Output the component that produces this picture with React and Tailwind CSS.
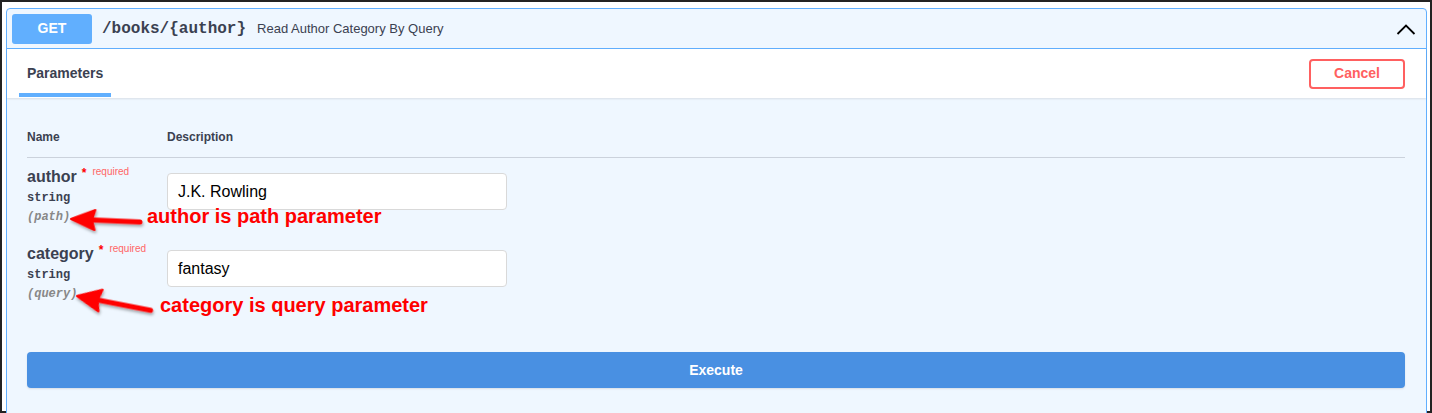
import React from "react";

const sans = { fontFamily: '"Liberation Sans", Arial, sans-serif' };
const mono = { fontFamily: '"Liberation Mono", "Courier New", monospace' };

function Arrow({ x, y, angle, length, head = 11 }) {
  return (
    <g transform={`translate(${x} ${y}) rotate(${angle})`} filter="url(#shadow)">
      <line x1={18} y1={0} x2={length} y2={0} stroke="#ff0000" strokeWidth={5} strokeLinecap="round" />
      <polygon points={`0,0 24,${-head} 21,0 24,${head}`} fill="#ff0000" stroke="#ff0000" strokeWidth={2} strokeLinejoin="round" />
    </g>
  );
}

function ParamRow({ name, kind, value }) {
  return (
    <div className="flex h-[77px]">
      <div className="w-[140px] pt-[9px]">
        <div className="h-[20px] text-[16px] leading-[20px] font-bold text-[#3b4151]">
          {name}
          <span className="ml-[5px] text-[12px] leading-[0] text-[#ff0000] align-[5px]">*</span>
          <span className="ml-[6px] text-[10px] leading-[0] font-normal text-[#ff6666] align-[7px]">required</span>
        </div>
        <div className="mt-[3px] text-[12px] leading-[16px] font-bold text-[#3b4151]" style={mono}>
          string
        </div>
        <div className="mt-[3px] text-[12px] leading-[16px] italic font-bold text-[#888888]" style={mono}>
          ({kind})
        </div>
      </div>
      <div className="pt-[15px]">
        <div className="w-[340px] h-[37px] bg-white border border-[#d9d9d9] rounded-[4px] pl-[10px] flex items-center text-[16px] text-black">
          {value}
        </div>
      </div>
    </div>
  );
}

export default function App() {
  return (
    <div className="relative w-[1432px] h-[413px] overflow-hidden bg-white" style={sans}>
      <div className="h-full border-2 border-[#222222] pl-[4px] pt-[6px] pr-[3px]">
        <div className="h-[420px] border border-[#61affe] rounded-[4px] bg-[#eff7ff]">
          {/* summary */}
          <div className="h-[40px] flex items-center pl-[5px] pr-[5px] border-b border-[#61affe]">
            <div className="w-[80px] h-[30px] rounded-[3px] bg-[#61affe] text-white font-bold text-[14px] flex items-center justify-center">
              GET
            </div>
            <div className="ml-[10px] text-[16px] font-bold text-[#3b4151]" style={mono}>
              /books/{"{author}"}
            </div>
            <div className="ml-[11px] text-[13px] text-[#3b4151]">Read Author Category By Query</div>
            <div className="ml-auto mr-[5px]">
              <svg width="20" height="20" viewBox="0 0 20 20">
                <polyline points="1.5,15 10,6.5 18.5,15" fill="none" stroke="#000" strokeWidth="1.8" />
              </svg>
            </div>
          </div>

          {/* section header */}
          <div className="h-[49px] bg-white flex items-stretch pl-[12px] pr-[21px] shadow-[0_1px_2px_rgba(0,0,0,0.1)]">
            <div className="flex flex-col">
              <div className="pt-[14px] px-[8px] text-[14px] leading-[20px] font-bold text-[#3b4151]">Parameters</div>
              <div className="mt-auto mb-[1px] h-[4px] bg-[#61affe]" />
            </div>
            <div className="ml-auto flex items-center">
              <button className="w-[96px] h-[30px] border-2 border-[#ff6060] rounded-[4px] text-[14px] font-bold text-[#ff6060] bg-transparent">
                Cancel
              </button>
            </div>
          </div>

          {/* parameters */}
          <div className="pl-[20px] pr-[21px]">
            <div className="pt-[31px] pb-[12px] flex text-[12px] leading-[16px] font-bold text-[#3b4151] border-b border-[#3b4151]/20">
              <div className="w-[140px]">Name</div>
              <div>Description</div>
            </div>
            <ParamRow name="author" kind="path" value="J.K. Rowling" />
            <ParamRow name="category" kind="query" value="fantasy" />
            <button className="mt-[40px] w-full h-[36px] rounded-[4px] bg-[#4990e2] text-white text-[14px] font-bold shadow-[0_1px_2px_rgba(0,0,0,0.1)]">
              Execute
            </button>
          </div>
        </div>
      </div>

      {/* annotations */}
      <svg className="absolute left-0 top-0 pointer-events-none" width="1432" height="413">
        <defs>
          <filter id="shadow" x="-20%" y="-50%" width="140%" height="200%">
            <feDropShadow dx="1" dy="2" stdDeviation="1.5" floodColor="#000" floodOpacity="0.35" />
          </filter>
        </defs>
        <Arrow x={71} y={219} angle={2.5} length={69} head={10} />
        <Arrow x={77} y={296} angle={11} length={75} head={11} />
      </svg>
      <div className="absolute left-[147px] top-[206px] text-[20px] leading-[20px] font-bold text-[#ff0000] whitespace-nowrap">
        author is path parameter
      </div>
      <div className="absolute left-[160px] top-[295px] text-[20px] leading-[20px] font-bold text-[#ff0000] whitespace-nowrap">
        category is query parameter
      </div>
    </div>
  );
}
